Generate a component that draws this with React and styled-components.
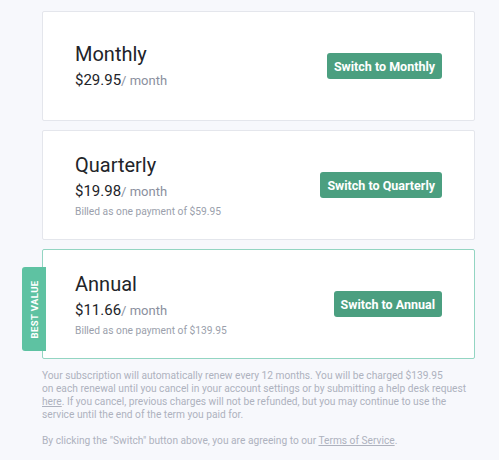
import React from "react";
import styled, { createGlobalStyle } from "styled-components";

const Global = createGlobalStyle`
  html, body { margin: 0; padding: 0; background: #f7f8fc; }
  body { font-family: "Roboto", "Noto Sans", sans-serif; -webkit-font-smoothing: antialiased; }
`;

const Page = styled.div`
  padding: 11px 24px 20px 42px;
  display: flex;
  flex-direction: column;
  gap: 9px;
`;

const Card = styled.div`
  position: relative;
  height: 110px;
  box-sizing: border-box;
  background: #fff;
  border: 1px solid ${(p) => (p.$featured ? "#93d5c2" : "#e4e6ec")};
  border-radius: 2px;
  padding: 0 32px;
  display: flex;
  align-items: center;
  justify-content: space-between;
`;

const Info = styled.div`
  display: flex;
  flex-direction: column;
`;

const Title = styled.div`
  font-size: 20px;
  font-weight: 400;
  color: #222429;
  line-height: 26px;
`;

const Price = styled.div`
  margin-top: 2px;
  font-size: 15px;
  color: #222429;
  line-height: 22px;
`;

const Per = styled.span`
  font-size: 13px;
  color: #8b8f9e;
`;

const Billed = styled.div`
  margin-top: 2px;
  font-size: 10.25px;
  color: #9b9fac;
  line-height: 14px;
`;

const Button = styled.button`
  font-family: inherit;
  background: #4b9f80;
  color: #fff;
  border: none;
  border-radius: 3px;
  height: 26px;
  padding: 0 7px;
  font-size: 12.5px;
  font-weight: 700;
  cursor: pointer;
`;

const Badge = styled.div`
  position: absolute;
  left: -21px;
  top: 17px;
  width: 24px;
  height: 84px;
  background: #5ec2a2;
  border-radius: 3px 0 0 3px;
  display: flex;
  align-items: center;
  justify-content: center;
`;

const BadgeText = styled.span`
  transform: rotate(-90deg);
  white-space: nowrap;
  color: #fff;
  font-size: 9.5px;
  font-weight: 700;
  letter-spacing: 0.4px;
`;

const Fine = styled.div`
  margin-top: 1px;
  font-size: 10.2px;
  line-height: 13px;
  color: #aeb2be;
  display: flex;
  flex-direction: column;
  gap: 13px;
`;

const Para = styled.p`
  margin: 0;
`;

const Link = styled.a`
  color: inherit;
  text-decoration: underline;
`;

const plans = [
  { name: "Monthly", price: "$29.95" },
  { name: "Quarterly", price: "$19.98", billed: "$59.95" },
  { name: "Annual", price: "$11.66", billed: "$139.95", featured: true },
];

export default function App() {
  return (
    <>
      <Global />
      <Page>
        {plans.map((p) => (
          <Card key={p.name} $featured={p.featured}>
            {p.featured && (
              <Badge>
                <BadgeText>BEST VALUE</BadgeText>
              </Badge>
            )}
            <Info>
              <Title>{p.name}</Title>
              <Price>
                {p.price}
                <Per>/ month</Per>
              </Price>
              {p.billed && <Billed>Billed as one payment of {p.billed}</Billed>}
            </Info>
            <Button>Switch to {p.name}</Button>
          </Card>
        ))}
        <Fine>
          <Para>
            Your subscription will automatically renew every 12 months. You will be charged $139.95
            <br />
            on each renewal until you cancel in your account settings or by submitting a help desk request{" "}
            <Link href="#">here</Link>. If you cancel, previous charges will not be refunded, but you may
            continue to use the service until the end of the term you paid for.
          </Para>
          <Para>
            By clicking the "Switch" button above, you are agreeing to our <Link href="#">Terms of Service</Link>.
          </Para>
        </Fine>
      </Page>
    </>
  );
}
